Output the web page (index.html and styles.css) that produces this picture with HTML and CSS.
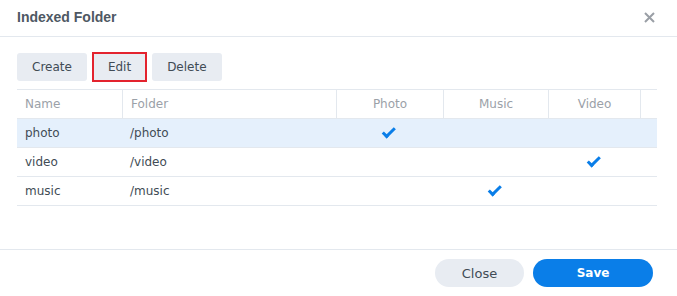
FILE: index.html
```html
<!DOCTYPE html>
<html>
<head>
    <title>Indexed Folder</title>
    <link rel="stylesheet" href="styles.css">
</head>
<body>
    <div class="dialog">
        <div class="dialog-header">
            <span class="dialog-title">Indexed Folder</span>
            <span class="close-x">
                <svg width="11" height="11" viewBox="0 0 11 11"><path d="M1 1 L10 10 M10 1 L1 10" stroke="#9a9fa6" stroke-width="2"/></svg>
            </span>
        </div>

        <div class="toolbar">
            <button class="btn">Create</button>
            <span class="marked"><button class="btn">Edit</button></span>
            <button class="btn">Delete</button>
        </div>

        <div class="grid">
            <div class="row head">
                <div class="cell">Name</div>
                <div class="cell">Folder</div>
                <div class="cell center">Photo</div>
                <div class="cell center">Music</div>
                <div class="cell center">Video</div>
                <div class="cell"></div>
            </div>
            <div class="row selected">
                <div class="cell">photo</div>
                <div class="cell">/photo</div>
                <div class="cell center"><span class="check"></span></div>
                <div class="cell center"></div>
                <div class="cell center"></div>
                <div class="cell"></div>
            </div>
            <div class="row">
                <div class="cell">video</div>
                <div class="cell">/video</div>
                <div class="cell center"></div>
                <div class="cell center"></div>
                <div class="cell center"><span class="check"></span></div>
                <div class="cell"></div>
            </div>
            <div class="row">
                <div class="cell">music</div>
                <div class="cell">/music</div>
                <div class="cell center"></div>
                <div class="cell center"><span class="check"></span></div>
                <div class="cell center"></div>
                <div class="cell"></div>
            </div>
        </div>

        <div class="dialog-footer">
            <button class="btn pill">Close</button>
            <button class="btn pill primary">Save</button>
        </div>
    </div>
</body>
</html>
```

FILE: styles.css
```css
:root {
    --text: #414b55;
    --muted: #9ba1a8;
    --line: #e3e8ee;
    --blue: #0a7ee8;
    --btn-bg: #e8ecf2;
    --selected: #e5f0fc;
}

* { box-sizing: border-box; margin: 0; padding: 0; }

body {
    background: #fff;
    font-family: "DejaVu Sans", Verdana, sans-serif;
    font-size: 12px;
    color: var(--text);
}

.dialog {
    width: 677px;
    height: 296px;
    display: flex;
    flex-direction: column;
}

.dialog-header {
    height: 37px;
    display: flex;
    align-items: center;
    justify-content: space-between;
    padding: 0 22px 2px 17px;
    border-bottom: 1px solid var(--line);
}

.dialog-title {
    font-family: "Liberation Sans", Arial, sans-serif;
    font-weight: bold;
    font-size: 14px;
    color: #4e5863;
}

.close-x {
    display: flex;
}

.toolbar {
    display: flex;
    align-items: center;
    gap: 5px;
    padding: 15px 17px 0;
    height: 44px;
}

.btn {
    height: 28px;
    padding: 0 15px;
    border: none;
    border-radius: 3px;
    background: var(--btn-bg);
    color: var(--text);
    font-family: inherit;
    font-size: 12px;
}

.marked {
    display: flex;
    border: 2px solid #e3232e;
}

.marked .btn {
    padding: 0 14px;
    height: 26px;
    border-radius: 0;
}

.grid {
    margin: 8px 20px 0 17px;
    border-top: 1px solid var(--line);
}

.row {
    display: grid;
    grid-template-columns: 105px 214px 107px 105px 92px 17px;
    height: 29px;
    border-bottom: 1px solid var(--line);
}

.row.selected {
    background: var(--selected);
}

.cell {
    display: flex;
    align-items: center;
    padding-left: 8px;
    white-space: nowrap;
}

.cell.center {
    justify-content: center;
    padding-left: 0;
}

.head .cell {
    color: var(--muted);
}

.head .cell + .cell {
    border-left: 1px solid var(--line);
}

.check {
    width: 13px;
    height: 7px;
    border-left: 3px solid var(--blue);
    border-bottom: 3px solid var(--blue);
    transform: rotate(-45deg) translate(1px, -2px);
}

.dialog-footer {
    margin-top: auto;
    height: 47px;
    border-top: 1px solid var(--line);
    display: flex;
    justify-content: flex-end;
    gap: 9px;
    padding: 9px 24px 0 0;
}

.pill {
    border-radius: 14px;
    font-size: 13px;
}

.pill:first-child {
    width: 89px;
}

.primary {
    width: 120px;
    background: var(--blue);
    color: #fff;
    font-weight: bold;
    font-size: 12px;
}
```
